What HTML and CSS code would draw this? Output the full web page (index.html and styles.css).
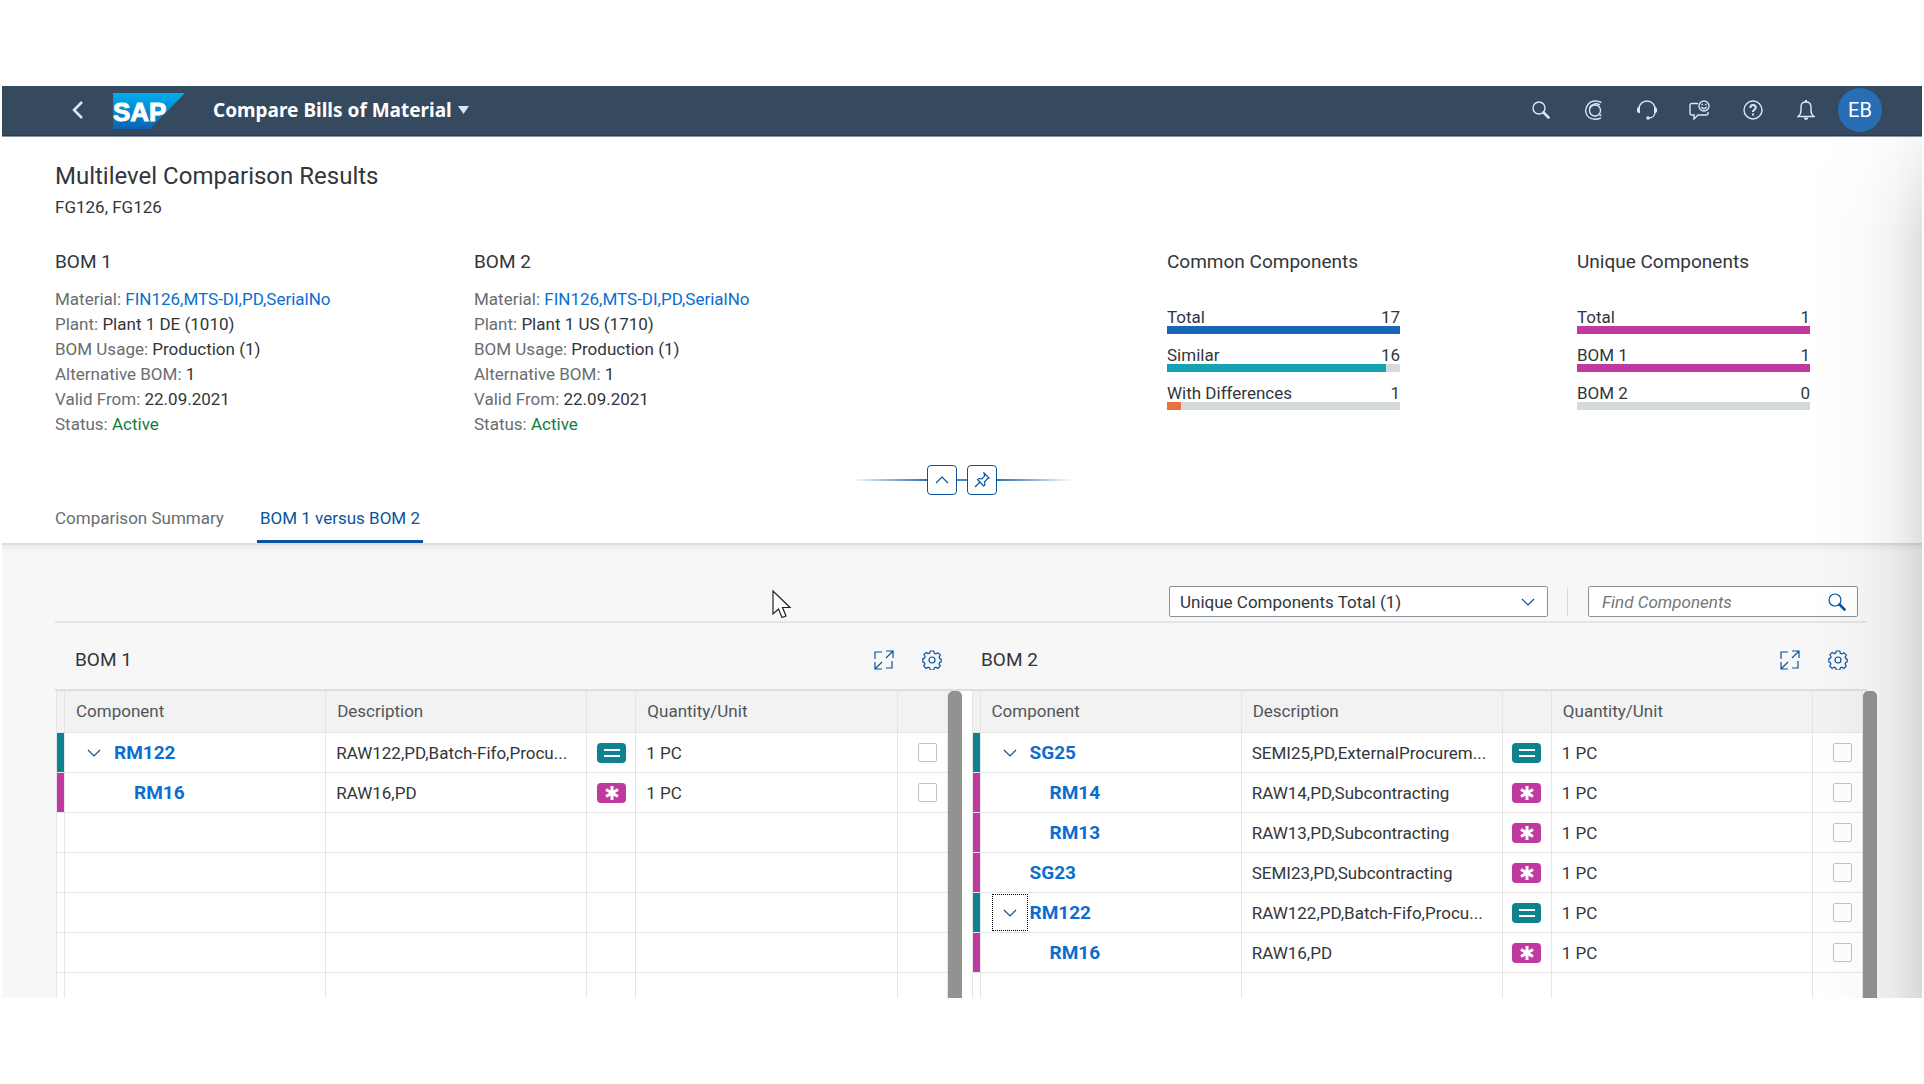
FILE: index.html
```html
<!DOCTYPE html>
<html lang="en">

<head>
  <meta charset="utf-8">
  <title>Compare Bills of Material</title>
  <link rel="stylesheet" href="styles.css">
</head>

<body>
  <!-- shared icons -->
  <svg class="defs" aria-hidden="true">
    <symbol id="i-search" viewBox="0 0 18 18"><circle cx="7" cy="7" r="6"/><path d="M11.5 11.5l5 5" stroke-width="2.6" stroke-linecap="round"/></symbol>
    <symbol id="i-down" viewBox="0 0 14 8"><path d="M1 1l6 6 6-6"/></symbol>
    <symbol id="i-full" viewBox="0 0 20 20"><path d="M1 9V2h7M12 1h7v7M19 1l-7 7M18 11v7h-6M8 19H1v-7M1 19l7-7"/></symbol>
    <symbol id="i-gear" viewBox="0 0 20 20"><circle cx="10" cy="10" r="3"/><path d="M8.2 1h3.6l.5 2.2 1.6.7 2-1.2 2.4 2.4-1.2 2 .7 1.6 1.4.4v2.8l-1.6.6-.5 1.5 1.2 2-2.4 2.4-2-1.2-1.6.7-.5 2.1H8.2l-.5-2.1-1.6-.7-2 1.2L1.700 16l1.200-2-.6-1.500-1.500-.6V8.700l1.700-.5.6-1.500-1.200-2 2.300-2.300 2 1.200 1.500-.6z"/></symbol>
    <symbol id="i-same" viewBox="0 0 29 20"><path d="M7 7h16M7 13h16" stroke-width="2"/></symbol>
    <symbol id="i-unique" viewBox="0 0 29 20"><path d="M15 3v14M9 6.500l12 7M21 6.500l-12 7" stroke-width="3"/></symbol>
  </svg>

  <div class="app">
    <header class="shell">
      <button class="back" aria-label="Back"><svg width="12" height="18" viewBox="0 0 12 18"><path d="M10 1L2 9l8 8" stroke-width="2.500"/></svg></button>
      <svg class="logo" width="72" height="36" viewBox="0 0 72 36" role="img" aria-label="SAP">
        <defs><linearGradient id="sap" x1="0" y1="0" x2="0" y2="1"><stop offset="0" stop-color="#00aeef"/><stop offset="1" stop-color="#0b62b4"/></linearGradient></defs>
        <path d="M0 0h72L37 36H0z" fill="url(#sap)"/>
        <text x="0" y="28">SAP</text>
      </svg>
      <button class="app-title">Compare Bills of Material <svg width="11" height="8" viewBox="0 0 11 8"><path d="M0 0h11L5.500 8z"/></svg></button>
      <div class="tools">
        <button aria-label="Search"><svg width="18" height="18"><use href="#i-search"/></svg></button>
        <button aria-label="CoPilot"><svg width="20" height="20" viewBox="0 0 20 20"><circle cx="11" cy="10.500" r="5.500"/><path d="M17.500 2.500C12 .2 7 .8 4 4.500C.5 9 1 14.500 5 17.500C9 20 13.500 19.500 17 17.800M5.500 8C7 4 12 2.500 16 5M15.500 15.500l2-.5"/></svg></button>
        <button aria-label="Support"><svg width="20" height="20" viewBox="0 0 20 20"><path d="M2 9a8 8 0 0 1 16 0M18 12c0 3-2 6-6 6"/><path class="solid" d="M0 9q0-2 3-2v6Q0 13 0 11zM20 9q0-2-3-2v6q3 0 3-2z"/><circle class="solid" cx="11" cy="18" r="1.800"/></svg></button>
        <button aria-label="Feedback"><svg width="21" height="20" viewBox="0 0 21 20"><path d="M9 3.500H3q-2 0-2 2V13q0 2 2 2h2v4l4-4h8q2 0 2-2v-1"/><circle cx="15" cy="6" r="5"/><path d="M12.500 7q2.500 3.500 5 0M12.500 4.500h1.500M16 4.500h1.500"/></svg></button>
        <button aria-label="Help"><svg width="20" height="20" viewBox="0 0 20 20"><circle cx="10" cy="10" r="9"/><path d="M7.300 8q0-3 2.700-3t2.700 2.500q0 1.500-1.500 2.300Q10 10.500 10 12M10 13.500v2" stroke-width="2"/></svg></button>
        <button aria-label="Notifications"><svg width="18" height="20" viewBox="0 0 18 20"><path d="M1 16.500q3-2 3-6V7q0-5 5-5t5 5v3.500q0 4 3 6z"/><path class="solid" d="M6.500 17.500h5q-1 2.500-2.500 2.500t-2.500-2.500zM8 0h2v2H8z"/></svg></button>
        <button class="avatar" aria-label="Profile">EB</button>
      </div>
    </header>

    <section class="object-header">
      <h1>Multilevel Comparison Results</h1>
      <p class="subtitle">FG126, FG126</p>

      <div class="facets">
        <div class="bom">
          <h2>BOM 1</h2>
          <p>Material: <a href="#">FIN126,MTS-DI,PD,SerialNo</a></p>
          <p>Plant: <span>Plant 1 DE (1010)</span></p>
          <p>BOM Usage: <span>Production (1)</span></p>
          <p>Alternative BOM: <span>1</span></p>
          <p>Valid From: <span>22.09.2021</span></p>
          <p>Status: <span class="active">Active</span></p>
        </div>
        <div class="bom">
          <h2>BOM 2</h2>
          <p>Material: <a href="#">FIN126,MTS-DI,PD,SerialNo</a></p>
          <p>Plant: <span>Plant 1 US (1710)</span></p>
          <p>BOM Usage: <span>Production (1)</span></p>
          <p>Alternative BOM: <span>1</span></p>
          <p>Valid From: <span>22.09.2021</span></p>
          <p>Status: <span class="active">Active</span></p>
        </div>
        <div class="chart common">
          <h2>Common Components</h2>
          <div class="bar-label"><span>Total</span><span>17</span></div>
          <div class="bar"><div class="fill blue" style="width: 100%"></div></div>
          <div class="bar-label"><span>Similar</span><span>16</span></div>
          <div class="bar"><div class="fill teal" style="width: 94%"></div></div>
          <div class="bar-label"><span>With Differences</span><span>1</span></div>
          <div class="bar"><div class="fill orange" style="width: 6%"></div></div>
        </div>
        <div class="chart">
          <h2>Unique Components</h2>
          <div class="bar-label"><span>Total</span><span>1</span></div>
          <div class="bar"><div class="fill pink" style="width: 100%"></div></div>
          <div class="bar-label"><span>BOM 1</span><span>1</span></div>
          <div class="bar"><div class="fill pink" style="width: 100%"></div></div>
          <div class="bar-label"><span>BOM 2</span><span>0</span></div>
          <div class="bar"></div>
        </div>
      </div>

      <div class="snap">
        <i class="line left"></i>
        <button aria-label="Collapse Header"><svg width="14" height="8" viewBox="0 0 14 8"><path d="M1 7l6-6 6 6"/></svg></button>
        <i class="line mid"></i>
        <button aria-label="Pin Header"><svg width="16" height="16" viewBox="0 0 16 16"><path d="M10 1l5 5-1.500.6-3 3.400.3 3.200-1.300.8-6-6.500 1.300-1 3.200.3 2.600-3zM5.500 10.500L1 15"/></svg></button>
        <i class="line right"></i>
      </div>

      <nav class="tabs">
        <a href="#">Comparison Summary</a>
        <a href="#" class="selected">BOM 1 versus BOM 2</a>
      </nav>
    </section>

    <main class="content">
      <div class="filters">
        <div class="select">
          <select aria-label="Component filter">
            <option>Unique Components Total (1)</option>
          </select>
          <svg width="14" height="8"><use href="#i-down"/></svg>
        </div>
        <i class="separator"></i>
        <div class="find">
          <input type="text" aria-label="Find Components" placeholder="Find Components">
          <button aria-label="Search"><svg width="18" height="18"><use href="#i-search"/></svg></button>
        </div>
      </div>

      <div class="toolbars">
        <div class="toolbar">
          <h2>BOM 1</h2>
          <button aria-label="Full Screen"><svg width="20" height="20"><use href="#i-full"/></svg></button>
          <button aria-label="Settings"><svg width="20" height="20"><use href="#i-gear"/></svg></button>
        </div>
        <div class="toolbar">
          <h2>BOM 2</h2>
          <button aria-label="Full Screen"><svg width="20" height="20"><use href="#i-full"/></svg></button>
          <button aria-label="Settings"><svg width="20" height="20"><use href="#i-gear"/></svg></button>
        </div>
      </div>

      <div class="tables">
        <div class="table-box">
          <table>
            <colgroup><col class="c-strip"><col><col><col class="c-status"><col><col class="c-check"></colgroup>
            <thead>
              <tr><th></th><th>Component</th><th>Description</th><th></th><th>Quantity/Unit</th><th></th></tr>
            </thead>
            <tbody>
              <tr>
                <td class="same"></td>
                <td><div class="node"><button class="toggle" aria-label="Collapse"><svg width="14" height="8"><use href="#i-down"/></svg></button><a href="#">RM122</a></div></td>
                <td>RAW122,PD,Batch-Fifo,Procu...</td>
                <td class="status"><svg class="tag same" width="29" height="20"><use href="#i-same"/></svg></td>
                <td>1 PC</td>
                <td class="check"><input type="checkbox" aria-label="Select RM122"></td>
              </tr>
              <tr>
                <td class="unique"></td>
                <td><div class="node child"><a href="#">RM16</a></div></td>
                <td>RAW16,PD</td>
                <td class="status"><svg class="tag unique" width="29" height="20"><use href="#i-unique"/></svg></td>
                <td>1 PC</td>
                <td class="check"><input type="checkbox" aria-label="Select RM16"></td>
              </tr>
              <tr><td></td><td></td><td></td><td></td><td></td><td></td></tr>
              <tr><td></td><td></td><td></td><td></td><td></td><td></td></tr>
              <tr><td></td><td></td><td></td><td></td><td></td><td></td></tr>
              <tr><td></td><td></td><td></td><td></td><td></td><td></td></tr>
              <tr><td></td><td></td><td></td><td></td><td></td><td></td></tr>
            </tbody>
          </table>
          <div class="scroll"></div>
        </div>

        <div class="table-box">
          <table>
            <colgroup><col class="c-strip"><col><col><col class="c-status"><col><col class="c-check"></colgroup>
            <thead>
              <tr><th></th><th>Component</th><th>Description</th><th></th><th>Quantity/Unit</th><th></th></tr>
            </thead>
            <tbody>
              <tr>
                <td class="same"></td>
                <td><div class="node"><button class="toggle" aria-label="Collapse"><svg width="14" height="8"><use href="#i-down"/></svg></button><a href="#">SG25</a></div></td>
                <td>SEMI25,PD,ExternalProcurem...</td>
                <td class="status"><svg class="tag same" width="29" height="20"><use href="#i-same"/></svg></td>
                <td>1 PC</td>
                <td class="check"><input type="checkbox" aria-label="Select SG25"></td>
              </tr>
              <tr>
                <td class="unique"></td>
                <td><div class="node child"><a href="#">RM14</a></div></td>
                <td>RAW14,PD,Subcontracting</td>
                <td class="status"><svg class="tag unique" width="29" height="20"><use href="#i-unique"/></svg></td>
                <td>1 PC</td>
                <td class="check"><input type="checkbox" aria-label="Select RM14"></td>
              </tr>
              <tr>
                <td class="unique"></td>
                <td><div class="node child"><a href="#">RM13</a></div></td>
                <td>RAW13,PD,Subcontracting</td>
                <td class="status"><svg class="tag unique" width="29" height="20"><use href="#i-unique"/></svg></td>
                <td>1 PC</td>
                <td class="check"><input type="checkbox" aria-label="Select RM13"></td>
              </tr>
              <tr>
                <td class="unique"></td>
                <td><div class="node leaf"><a href="#">SG23</a></div></td>
                <td>SEMI23,PD,Subcontracting</td>
                <td class="status"><svg class="tag unique" width="29" height="20"><use href="#i-unique"/></svg></td>
                <td>1 PC</td>
                <td class="check"><input type="checkbox" aria-label="Select SG23"></td>
              </tr>
              <tr>
                <td class="same"></td>
                <td><div class="node"><button class="toggle focused" aria-label="Collapse"><svg width="14" height="8"><use href="#i-down"/></svg></button><a href="#">RM122</a></div></td>
                <td>RAW122,PD,Batch-Fifo,Procu...</td>
                <td class="status"><svg class="tag same" width="29" height="20"><use href="#i-same"/></svg></td>
                <td>1 PC</td>
                <td class="check"><input type="checkbox" aria-label="Select RM122"></td>
              </tr>
              <tr>
                <td class="unique"></td>
                <td><div class="node child"><a href="#">RM16</a></div></td>
                <td>RAW16,PD</td>
                <td class="status"><svg class="tag unique" width="29" height="20"><use href="#i-unique"/></svg></td>
                <td>1 PC</td>
                <td class="check"><input type="checkbox" aria-label="Select RM16"></td>
              </tr>
              <tr><td></td><td></td><td></td><td></td><td></td><td></td></tr>
            </tbody>
          </table>
          <div class="scroll"></div>
        </div>
      </div>
    </main>

    <svg class="cursor" width="20" height="29" viewBox="0 0 20 29"><path d="M1 1v23l5.500-5 3.500 8.500 4-1.500-3.500-8.500H18z"/></svg>
  </div>
</body>

</html>
```
FILE: styles.css
```css
* {
  box-sizing: border-box;
}

body {
  margin: 0;
  padding: 86px 2px;
  background: #fff;
  font-family: Roboto, "Liberation Sans", sans-serif;
  font-size: 17px;
  color: #32363a;
}

h1, h2, p {
  margin: 0;
  font-weight: 400;
}

a {
  color: #0a6ed1;
  text-decoration: none;
}

button {
  padding: 0;
  border: 0;
  background: none;
  font: inherit;
  color: inherit;
  display: flex;
  align-items: center;
  justify-content: center;
}

svg {
  fill: none;
  stroke: #0854a0;
  stroke-width: 1.2;
  display: block;
}

.defs {
  position: absolute;
  width: 0;
  height: 0;
}

.app {
  position: relative;
  height: calc(100vh - 172px);
  overflow: hidden;
  display: flex;
  flex-direction: column;
}

/* shading along the right edge */
.app::after {
  content: "";
  position: absolute;
  z-index: 2;
  top: 51px;
  right: 0;
  bottom: 0;
  width: 110px;
  background: linear-gradient(to right, rgba(0, 0, 0, 0), rgba(0, 0, 0, 0.02) 50%, rgba(0, 0, 0, 0.05) 75%, rgba(0, 0, 0, 0.12));
  -webkit-mask-image: linear-gradient(rgba(0, 0, 0, 0.3), #000 100px);
  mask-image: linear-gradient(rgba(0, 0, 0, 0.3), #000 100px);
  pointer-events: none;
}

/* shell bar */
.shell {
  flex: none;
  height: 51px;
  padding: 0 40px 3px 68px;
  background: #354a5f;
  border-bottom: 1px solid #8a97a5;
  box-shadow: inset 0 -1px #283c50;
  color: #fff;
  display: flex;
  align-items: center;
}

.shell svg {
  stroke: #d1e8ff;
  stroke-width: 1.4;
}

.back {
  width: 16px;
  height: 36px;
}

.shell .logo {
  margin: 2px 28px 0 27px;
  stroke: none;
}

.logo text {
  fill: #fff;
  stroke: #fff;
  stroke-width: 1;
  font: 700 26px "Liberation Sans", sans-serif;
}

.app-title {
  gap: 6px;
  font-family: "Noto Sans", sans-serif;
  font-size: 19px;
  line-height: 24px;
  font-weight: 700;
}

.app-title svg {
  fill: #d1e8ff;
  stroke: none;
}

.tools {
  margin-left: auto;
  display: flex;
  align-items: center;
}

.tools button {
  width: 53px;
  height: 44px;
}

.tools .solid {
  fill: #d1e8ff;
  stroke: none;
}

.tools .avatar {
  width: 44px;
  margin-left: 6px;
  border-radius: 50%;
  background: #286eb4;
  font-size: 20px;
}

/* object header */
.object-header {
  flex: none;
  padding: 25px 53px 0;
  background: #fff;
  border-bottom: 2px solid #dedede;
  box-shadow: 0 2px 6px rgba(0, 0, 0, 0.08);
  z-index: 1;
}

h1 {
  font-size: 24px;
  line-height: 28px;
}

.subtitle {
  margin-top: 5px;
  line-height: 24px;
}

h2 {
  font-size: 19px;
  line-height: 24px;
}

.facets {
  margin-top: 31px;
  display: flex;
}

.bom {
  width: 419px;
}

.bom h2 {
  margin-bottom: 13px;
}

.bom p {
  line-height: 25px;
  color: #6a6d70;
}

.bom span {
  color: #32363a;
}

.bom .active {
  color: #107e3e;
}

.chart {
  width: 233px;
  margin-right: 59px;
}

.common {
  margin-left: auto;
  margin-right: 177px;
}

.chart h2 {
  margin-bottom: 34px;
}

.bar-label {
  display: flex;
  justify-content: space-between;
  line-height: 18px;
}

.bar {
  height: 8px;
  margin-bottom: 12px;
  background: #d5dadc;
}

.fill {
  height: 8px;
}

.blue {
  background: #1866b4;
}

.teal {
  background: #13a4b4;
}

.orange {
  background: #e8743b;
}

.pink {
  background: #c0399f;
}

.snap {
  margin-top: 28px;
  display: flex;
  align-items: center;
  justify-content: center;
}

.snap button {
  width: 30px;
  height: 30px;
  border: 1px solid #0854a0;
  border-radius: 4px;
}

.line {
  width: 76px;
  height: 2px;
  background: #4f87bd;
}

.line.mid {
  width: 10px;
}

.line.left {
  background: linear-gradient(to left, #2f6fae, transparent);
}

.line.right {
  background: linear-gradient(to right, #2f6fae, transparent);
}

.tabs {
  display: flex;
  gap: 33px;
}

.tabs a {
  padding: 11px 3px 10px;
  margin-left: -3px;
  line-height: 24px;
  color: #6a6d70;
  border-bottom: 3px solid transparent;
}

.tabs .selected {
  color: #0854a0;
  border-color: #0854a0;
}

/* comparison */
.content {
  flex: 1;
  min-height: 0;
  overflow: hidden;
  background: #f7f7f7;
}

.filters {
  margin: 0 55px 0 53px;
  padding: 41px 9px 4px 0;
  border-bottom: 2px solid #e4e4e4;
  display: flex;
  justify-content: flex-end;
  align-items: center;
}

.select {
  position: relative;
  width: 379px;
}

.select select {
  width: 100%;
  height: 31px;
  padding: 0 10px;
  border: 1px solid #89919a;
  border-radius: 2px;
  background: #fff;
  font: inherit;
  color: inherit;
  appearance: none;
}

.select svg {
  position: absolute;
  right: 13px;
  top: 12px;
  pointer-events: none;
}

.separator {
  width: 1px;
  height: 29px;
  margin: 0 20px 0 19px;
  background: #d9d9d9;
}

.find {
  width: 270px;
  height: 31px;
  padding-right: 11px;
  border: 1px solid #89919a;
  border-radius: 2px;
  background: #fff;
  display: flex;
  align-items: center;
}

.find input {
  flex: 1;
  min-width: 0;
  padding: 0 13px;
  border: 0;
  background: none;
  font: inherit;
}

.find input::placeholder {
  font-style: italic;
  color: #74777a;
}

.toolbars {
  margin: 0 55px 0 53px;
  height: 68px;
  padding-top: 8px;
  border-bottom: 2px solid #dedede;
  display: grid;
  grid-template-columns: 1fr 1fr;
}

.toolbar {
  padding: 0 19px 0 20px;
  display: flex;
  align-items: center;
  gap: 28px;
}

.toolbar h2 {
  flex: 1;
}

.tables {
  margin: 0 45px 0 54px;
  display: grid;
  grid-template-columns: 1fr 1fr;
  gap: 10px;
  background: #fff;
}

.table-box {
  display: flex;
  min-width: 0;
}

.scroll {
  flex: none;
  width: 14px;
  background: #929292;
  border-radius: 5px 5px 0 0;
}

table {
  flex: 1;
  width: 100%;
  min-width: 0;
  table-layout: fixed;
  border-collapse: separate;
  border-spacing: 0;
  border-left: 1px solid #e5e5e5;
}

.c-strip {
  width: 8px;
}

.c-status {
  width: 49px;
}

.c-check {
  width: 50px;
}

th, td {
  height: 40px;
  padding: 0 10px;
  border-right: 1px solid #e5e5e5;
  border-bottom: 1px solid #e5e5e5;
  font-weight: 400;
  text-align: left;
  white-space: nowrap;
  overflow: hidden;
  text-overflow: ellipsis;
}

th {
  height: 42px;
  padding: 0 11px 2px;
  background: #f2f2f2;
  color: #51555a;
}

th:first-child, td:first-child {
  padding: 0;
}

.same {
  background: #0f828f;
}

.unique {
  background: #c0399f;
}

.node {
  display: flex;
  align-items: center;
  gap: 2px;
  padding-left: 1px;
}

.node a {
  font-size: 19px;
  font-weight: 700;
}

.node.leaf {
  padding-left: 39px;
}

.node.child {
  padding-left: 59px;
}

.toggle {
  width: 36px;
  height: 37px;
}

.toggle.focused {
  outline: 1px dotted #000;
  outline-offset: -1px;
}

td.status {
  padding: 0;
}

.tag {
  margin: 0 auto;
  border-radius: 4px;
  stroke: #fff;
}

td.check {
  padding: 0 0 0 20px;
}

.check input {
  display: block;
  width: 19px;
  height: 19px;
  margin: 0;
  border: 1px solid #bfc3c7;
  border-radius: 2px;
  background: #fff;
  appearance: none;
}

.cursor {
  position: absolute;
  left: 770px;
  top: 504px;
  fill: #fff;
  stroke: #222;
}
```
